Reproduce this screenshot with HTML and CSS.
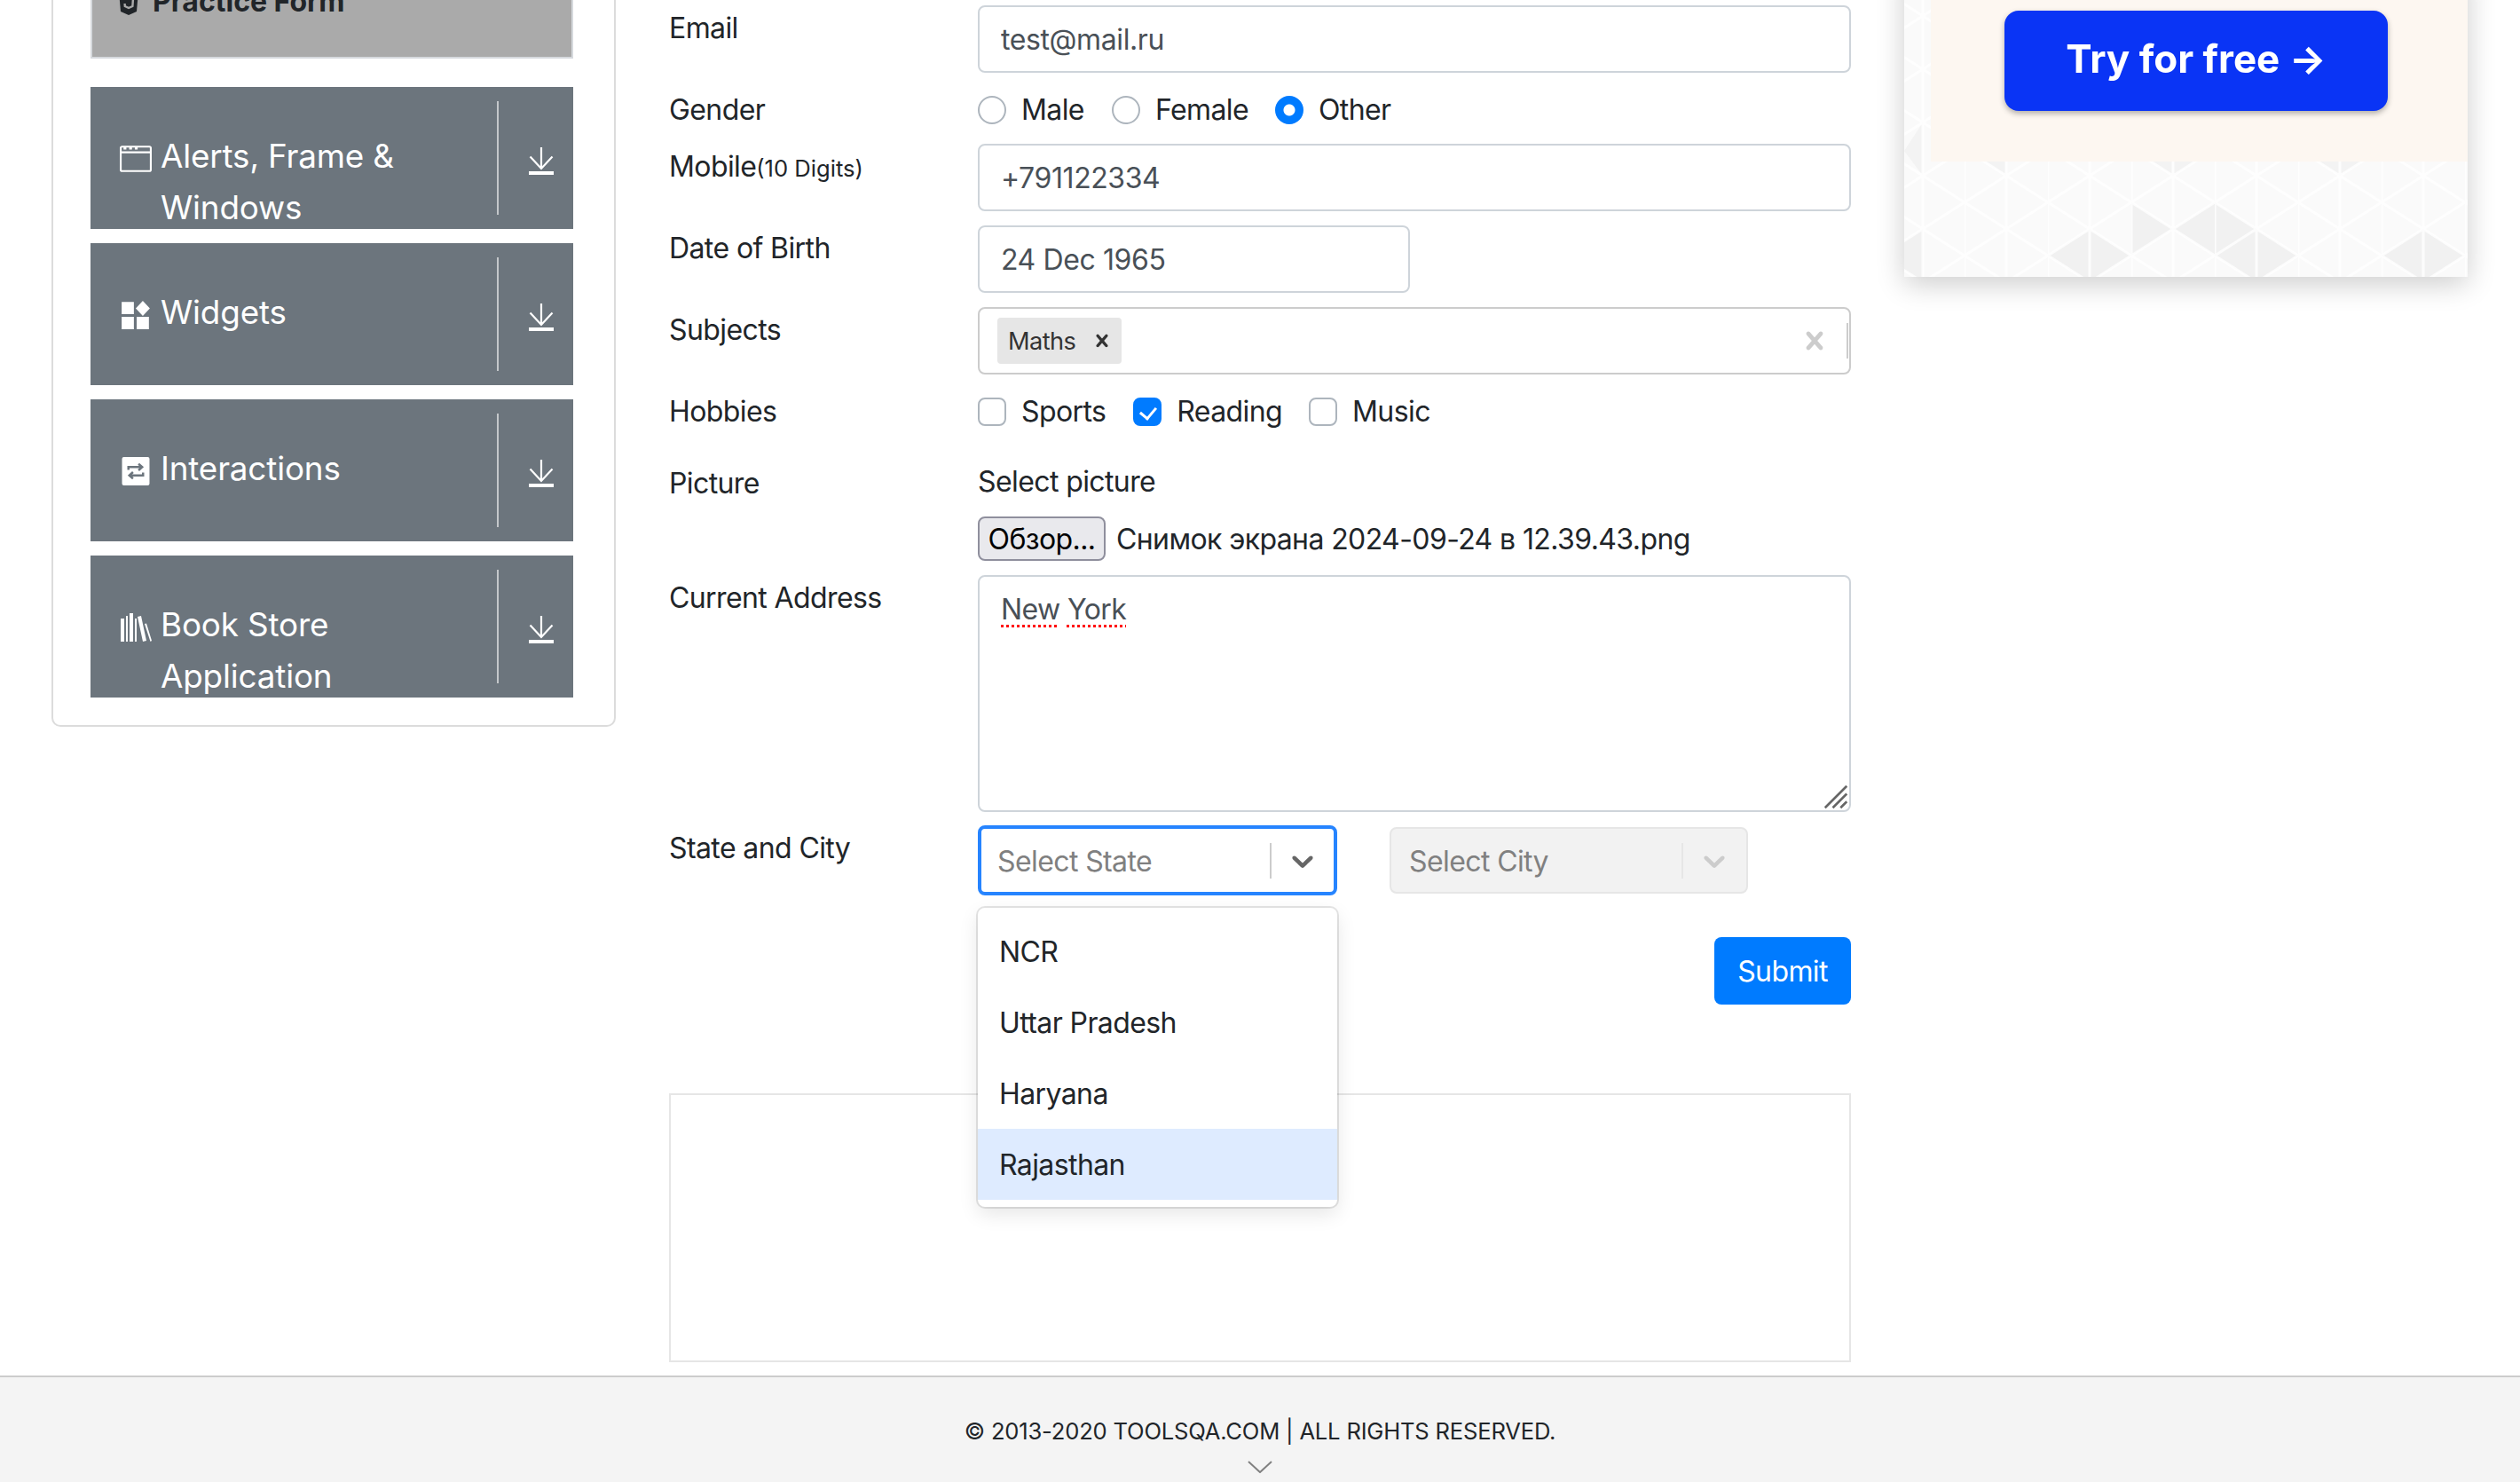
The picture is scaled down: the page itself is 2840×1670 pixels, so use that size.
FILE: index.html
```html
<!DOCTYPE html>
<html lang="en">
<head>
    <meta charset="UTF-8">
    <meta name="viewport" content="width=device-width, initial-scale=1.0">
    <title>Practice Form</title>
    <link rel="stylesheet" href="styles.css">
</head>
<body>
<svg class="defs" width="0" height="0">
    <symbol id="download" viewBox="0 0 28 31">
        <path d="M14 0V24M1.5 10.5L14 24 26.5 10.5" fill="none" stroke="#fff" stroke-width="2.2"/>
        <rect y="27" width="28" height="4" fill="#fff"/>
    </symbol>
    <symbol id="chevron" viewBox="0 0 20 20">
        <path d="M4.516 7.548c0.436-0.446 1.043-0.481 1.576 0l3.908 3.747 3.908-3.747c0.533-0.481 1.141-0.446 1.574 0 0.436 0.445 0.408 1.197 0 1.615-0.406 0.418-4.695 4.502-4.695 4.502-0.217 0.223-0.502 0.335-0.787 0.335s-0.57-0.112-0.789-0.335c0 0-4.287-4.084-4.695-4.502s-0.436-1.17 0-1.615z"/>
    </symbol>
    <symbol id="cross" viewBox="0 0 20 20">
        <path d="M14.348 14.849c-0.469 0.469-1.229 0.469-1.697 0l-2.651-3.030-2.651 3.029c-0.469 0.469-1.229 0.469-1.697 0-0.469-0.469-0.469-1.229 0-1.697l2.758-3.15-2.759-3.152c-0.469-0.469-0.469-1.228 0-1.697s1.228-0.469 1.697 0l2.652 3.031 2.651-3.031c0.469-0.469 1.228-0.469 1.697 0s0.469 1.229 0 1.697l-2.758 3.152 2.758 3.15c0.469 0.469 0.469 1.229 0 1.698z"/>
    </symbol>
</svg>

<div class="page">
    <aside class="sidebar">
        <div class="active-item">
            <svg class="html-icon" viewBox="0 0 22 27"><path d="M0 0H22L20 23 11 27 2 23Z" fill="#212529"/><path d="M6 8H16L15.4 17 11 19 6.8 17 6.6 14" fill="none" stroke="#aaa" stroke-width="2.4"/></svg>
            <span>Practice Form</span>
        </div>

        <div class="group">
            <div class="group-title">
                <svg class="group-icon" viewBox="0 0 34 28"><rect x="1" y="1" width="32" height="26" rx="1.5" fill="none" stroke="#fff" stroke-width="2"/><path d="M1 7H33" stroke="#fff" stroke-width="2"/><path d="M4 3H7M10 3H13M16 3H19" stroke="#fff" stroke-width="2.4"/></svg>
                <span>Alerts, Frame &amp; Windows</span>
            </div>
            <div class="group-toggle"><svg class="download"><use href="#download"/></svg></div>
        </div>

        <div class="group">
            <div class="group-title">
                <svg class="group-icon" viewBox="0 0 34 30"><path d="M2 1H15V14H2ZM2 17H15V30H2ZM18 17H31V30H18ZM24.500 0L32 8 24.500 16 17 8Z" fill="#fff"/></svg>
                <span>Widgets</span>
            </div>
            <div class="group-toggle"><svg class="download"><use href="#download"/></svg></div>
        </div>

        <div class="group">
            <div class="group-title">
                <svg class="group-icon" viewBox="0 0 34 31"><rect x="2" y="0" width="30" height="31" rx="2" fill="#fff"/><path d="M9 14V11H23M20 7.500L24 11 20 14.500M25 17V20H11M14 16.500L10 20 14 23.500" fill="none" stroke="#6c757d" stroke-width="2.4"/></svg>
                <span>Interactions</span>
            </div>
            <div class="group-toggle"><svg class="download"><use href="#download"/></svg></div>
        </div>

        <div class="group">
            <div class="group-title">
                <svg class="group-icon" viewBox="0 0 36 32"><path d="M1 6H5V32H1ZM7 3H9V32H7ZM11 0H15V32H11ZM17 6H19V32H17ZM20 4L24 3 30 31 26 32ZM28 12L30 11.500 36 31 34.500 32Z" fill="#fff"/></svg>
                <span>Book Store Application</span>
            </div>
            <div class="group-toggle"><svg class="download"><use href="#download"/></svg></div>
        </div>
    </aside>

    <main class="main">
        <form class="form">
            <div class="row">
                <label>Email</label>
                <input class="field" type="text" value="test@mail.ru">
            </div>
            <div class="row">
                <label>Gender</label>
                <div class="options">
                    <label class="option option-male"><input type="radio" name="gender">Male</label>
                    <label class="option option-female"><input type="radio" name="gender">Female</label>
                    <label class="option"><input type="radio" name="gender" checked>Other</label>
                </div>
            </div>
            <div class="row">
                <label>Mobile<small>(10 Digits)</small></label>
                <input class="field" type="text" value="+791122334">
            </div>
            <div class="row">
                <label>Date of Birth</label>
                <input class="field field-date" type="text" value="24 Dec 1965">
            </div>
            <div class="row">
                <label>Subjects</label>
                <div class="multi">
                    <div class="chip">
                        <span>Maths</span>
                        <svg class="chip-x"><use href="#cross"/></svg>
                    </div>
                    <svg class="clear-x"><use href="#cross"/></svg>
                    <span class="multi-sep"></span>
                </div>
            </div>
            <div class="row row-hobbies">
                <label>Hobbies</label>
                <div class="options">
                    <label class="option option-sports"><input type="checkbox">Sports</label>
                    <label class="option option-reading"><input type="checkbox" checked>Reading</label>
                    <label class="option"><input type="checkbox">Music</label>
                </div>
            </div>
            <div class="row">
                <label>Picture</label>
                <div>
                    <div class="file-label">Select picture</div>
                    <div class="file-line">
                        <button type="button" class="file-btn">Обзор...</button>
                        <span class="file-name">Снимок экрана 2024-09-24 в 12.39.43.png</span>
                    </div>
                </div>
            </div>
            <div class="row">
                <label>Current Address</label>
                <div class="address">
                    <span class="misspelt">New</span> <span class="misspelt">York</span>
                    <svg class="grip" viewBox="0 0 16 16"><path d="M15 1L1 15M15 6L6 15M15 11L11 15" stroke="#666" stroke-width="1.500"/></svg>
                </div>
            </div>
            <div class="row row-state">
                <label>State and City</label>
                <div class="selects">
                    <div class="select-wrap">
                        <div class="select select-focus">
                            <span class="select-text">Select State</span>
                            <span class="select-sep"></span>
                            <svg class="select-arrow"><use href="#chevron"/></svg>
                        </div>
                        <ul class="menu">
                            <li>NCR</li>
                            <li>Uttar Pradesh</li>
                            <li>Haryana</li>
                            <li class="menu-active">Rajasthan</li>
                        </ul>
                    </div>
                    <div class="select select-off">
                        <span class="select-text">Select City</span>
                        <span class="select-sep"></span>
                        <svg class="select-arrow"><use href="#chevron"/></svg>
                    </div>
                </div>
            </div>
            <div class="submit-line">
                <button type="button" class="submit">Submit</button>
            </div>
        </form>
        <div class="ad-slot"></div>
    </main>

    <aside class="ad">
        <svg class="ad-pattern" viewBox="0 -40 635 352">
            <defs>
                <pattern id="lattice" width="94" height="60" patternUnits="userSpaceOnUse" x="68" y="18">
                    <path d="M0 30L47 0 94 30 47 60ZM0 0V60M47 0V60" fill="none" stroke="#fff" stroke-width="3" opacity="0.8"/>
                </pattern>
            </defs>
            <rect x="0" y="-40" width="635" height="352" fill="#fafafa"/>
            <path d="M162 288L209 258V318ZM209 258L256 288 209 318ZM350 288L397 258V318ZM397 258L444 288 397 318ZM538 288L585 258V318ZM585 258L632 288 585 318ZM-26 288L21 258V318ZM256 228L303 258 256 288ZM303 258L350 228V288ZM350 228L397 258 350 288Z" fill="#f1f1f1"/>
            <path d="M68 168L115 138V198ZM256 168L303 138V198ZM303 138L350 168 303 198ZM444 168L491 138V198ZM491 138L538 168 491 198ZM0 170L21 138V198Z" fill="#f3f3f3"/>
            <rect x="0" y="-40" width="635" height="352" fill="url(#lattice)"/>
        </svg>
        <div class="ad-panel">
            <div class="ad-btn">Try for free →</div>
        </div>
    </aside>
</div>

<footer class="footer">
    <span>© 2013-2020 TOOLSQA.COM | ALL RIGHTS RESERVED.</span>
    <svg class="footer-arrow" viewBox="0 0 28 14"><path d="M1 1L14 13 27 1" fill="none" stroke="#808080" stroke-width="2"/></svg>
</footer>
</body>
</html>
```

FILE: styles.css
```css
* {
    box-sizing: border-box;
}

html, body {
    margin: 0;
    padding: 0;
}

body {
    width: 2840px;
    height: 1670px;
    overflow: hidden;
    font-family: Inter, 'Noto Sans', sans-serif;
    font-size: 32px;
    line-height: 48px;
    letter-spacing: -0.6px;
    color: #212529;
    background: #fff;
}

.defs {
    display: block;
    height: 0;
}

.page {
    display: flex;
    gap: 60px;
    height: 1550px;
    padding-left: 58px;
    overflow: hidden;
}

/* sidebar */
.sidebar {
    width: 636px;
    height: 859px;
    margin-top: -40px;
    padding: 0 46px 0 42px;
    border: 2px solid #dcdcdc;
    border-radius: 10px;
    flex-shrink: 0;
}

.active-item {
    display: flex;
    align-items: flex-start;
    gap: 16px;
    height: 104px;
    margin-bottom: 32px;
    padding: 16px 0 0 30px;
    background: #aaa;
    border: 2px solid #d6d9dd;
    border-top: 0;
    font-weight: 700;
    letter-spacing: 0;
}

.html-icon {
    width: 22px;
    height: 27px;
    margin-top: 12px;
}

.group {
    display: flex;
    height: 160px;
    margin-bottom: 16px;
    background: #6c757d;
    color: #fff;
    font-size: 36.8px;
    line-height: 57.6px;
    letter-spacing: -0.15px;
    overflow: hidden;
}

.group-title {
    display: flex;
    align-items: flex-start;
    width: 458px;
    padding: 49px 40px 0 33px;
}

.group-icon {
    flex: 0 0 36px;
    width: 36px;
    height: 32px;
    margin: 16px 10px 0 0;
}

.group-toggle {
    flex: 1;
    height: 128px;
    margin-top: 16px;
    padding: 52px 0 0 34px;
    border-left: 2px solid #c4c7ca;
}

.download {
    display: block;
    width: 28px;
    height: 31px;
}

/* form */
.main {
    width: 1332px;
    flex-shrink: 0;
}

.form {
    padding-top: 6px;
}

.row {
    display: grid;
    grid-template-columns: 348px 1fr;
    margin-bottom: 16px;
}

.row > label {
    padding-top: 2px;
    margin-bottom: -2px;
}

.row small {
    font-size: 25.6px;
    letter-spacing: 0;
}

.row-hobbies {
    margin-bottom: 33px;
}

.field {
    display: block;
    width: 100%;
    height: 76px;
    padding: 0 24px;
    border: 2px solid #ced4da;
    border-radius: 8px;
    font: inherit;
    letter-spacing: -0.4px;
    color: #495057;
    background: #fff;
}

.field-date {
    width: 487px;
}

.options {
    display: flex;
}

.option {
    display: flex;
    align-items: center;
    padding-top: 2px;
    margin-bottom: -2px;
}

.option input {
    appearance: none;
    width: 32px;
    height: 32px;
    margin: 0 17px 0 0;
    border: 2px solid #adb5bd;
    background: #fff;
    flex-shrink: 0;
}

.option input[type="radio"] {
    border-radius: 50%;
}

.option input[type="radio"]:checked {
    border-color: #007bff;
    background: radial-gradient(circle, #fff 0 6px, #007bff 7px);
}

.option input[type="checkbox"] {
    position: relative;
    border-radius: 8px;
}

.option input[type="checkbox"]:checked {
    border-color: #007bff;
    background: #007bff;
}

.option input[type="checkbox"]:checked::after {
    content: "";
    position: absolute;
    left: 9px;
    top: 5px;
    width: 9px;
    height: 14px;
    border: solid #fff;
    border-width: 0 3.5px 3.5px 0;
    transform: rotate(40deg);
}

.option-male { margin-right: 31px; }
.option-female { margin-right: 30px; }
.option-sports { margin-right: 31px; }
.option-reading { margin-right: 30px; }

.multi {
    display: flex;
    align-items: center;
    height: 76px;
    padding: 0 0 0 20px;
    border: 2px solid #ccc;
    border-radius: 8px;
}

.chip {
    display: flex;
    align-items: center;
    width: 140px;
    height: 52px;
    padding: 2px 8px 0 12px;
    background: #e6e6e6;
    border-radius: 4px;
    font-size: 27.2px;
    color: #333;
}

.chip-x {
    width: 28px;
    height: 28px;
    margin-top: -2px;
    margin-left: auto;
    fill: #333;
}

.clear-x {
    width: 40px;
    height: 40px;
    margin-left: auto;
    margin-right: 16px;
    fill: #ccc;
}

.multi-sep {
    width: 2px;
    height: 40px;
    background: #ccc;
    margin-right: 1px;
}

.file-label {
    margin-bottom: 15px;
}

.file-line {
    display: flex;
    align-items: center;
    gap: 12px;
    height: 50px;
}

.file-name {
    padding-top: 2px;
}

.file-btn {
    width: 144px;
    height: 50px;
    padding: 0;
    border: 2px solid #8f8f9d;
    border-radius: 8px;
    background: #e9e9ed;
    font: inherit;
    letter-spacing: inherit;
    color: #000;
}

.address {
    position: relative;
    height: 267px;
    padding: 13px 24px;
    border: 2px solid #ced4da;
    border-radius: 8px;
    color: #495057;
}

.misspelt {
    text-decoration: underline dotted #f00 3px;
    text-underline-offset: 6px;
}

.grip {
    position: absolute;
    right: 1px;
    bottom: 1px;
    width: 28px;
    height: 28px;
}

.row-state {
    margin-top: -1px;
    margin-bottom: 47px;
}

.selects {
    display: flex;
    align-items: center;
    gap: 59px;
}

.select-wrap {
    position: relative;
    width: 405px;
}

.select {
    display: flex;
    align-items: center;
    border-radius: 8px;
}

.select-text {
    flex: 1;
    padding-top: 2px;
}

.select-sep {
    width: 2px;
    height: 40px;
}

.select-arrow {
    width: 40px;
    height: 40px;
    margin: 0 16px 0 15px;
}

.select-focus {
    height: 79px;
    padding-left: 18px;
    border: 4px solid #2684ff;
    color: #808080;
}

.select-focus .select-sep {
    background: #ccc;
}

.select-focus .select-arrow {
    fill: #666;
    margin-right: 15px;
}

.select-off {
    width: 404px;
    height: 75px;
    padding-left: 20px;
    border: 2px solid #e6e6e6;
    background: #f2f2f2;
    color: #808080;
}

.select-off .select-sep {
    background: #e6e6e6;
}

.select-off .select-arrow {
    fill: #ccc;
}

.menu {
    position: absolute;
    left: 0;
    right: 0;
    top: 93px;
    margin: 0;
    padding: 9px 0 8px;
    list-style: none;
    background: #fff;
    border-radius: 8px;
    box-shadow: 0 0 0 2px rgba(0, 0, 0, 0.1), 0 8px 22px rgba(0, 0, 0, 0.1);
    z-index: 2;
}

.menu li {
    height: 80px;
    padding-left: 24px;
    line-height: 82px;
}

.menu .menu-active {
    background: #deebff;
}

.submit-line {
    display: flex;
    justify-content: flex-end;
}

.submit {
    width: 154px;
    height: 76px;
    padding: 2px 0 0;
    border: 0;
    border-radius: 8px;
    background: #007bff;
    font: inherit;
    letter-spacing: inherit;
    color: #fff;
}

.ad-slot {
    height: 303px;
    margin-top: 100px;
    border: 2px solid #e6e6e6;
}

/* ad on the right */
.ad {
    position: relative;
    width: 635px;
    height: 352px;
    margin-top: -40px;
    box-shadow: 0 8px 30px rgba(0, 0, 0, 0.2);
    flex-shrink: 0;
}

.ad-pattern {
    position: absolute;
    left: 0;
    top: 0;
    width: 635px;
    height: 352px;
}

.ad-panel {
    position: relative;
    height: 222px;
    margin-left: 30px;
    padding: 52px 0 0 83px;
    background: #fdf7f1;
}

.ad-btn {
    width: 432px;
    height: 113px;
    border-radius: 16px;
    background: #0a34f5;
    box-shadow: 0 3px 6px rgba(0, 0, 0, 0.3);
    font-size: 44px;
    font-weight: 700;
    line-height: 108px;
    letter-spacing: 0;
    text-align: center;
    color: #fff;
    filter: blur(0.7px);
}

/* footer */
.footer {
    display: flex;
    flex-direction: column;
    align-items: center;
    height: 120px;
    padding-top: 40px;
    background: #f4f4f4;
    border-top: 2px solid #ccc;
    font-size: 25.6px;
    line-height: 42px;
    letter-spacing: -0.2px;
}

.footer-arrow {
    width: 28px;
    height: 14px;
    margin-top: 12px;
}
```
